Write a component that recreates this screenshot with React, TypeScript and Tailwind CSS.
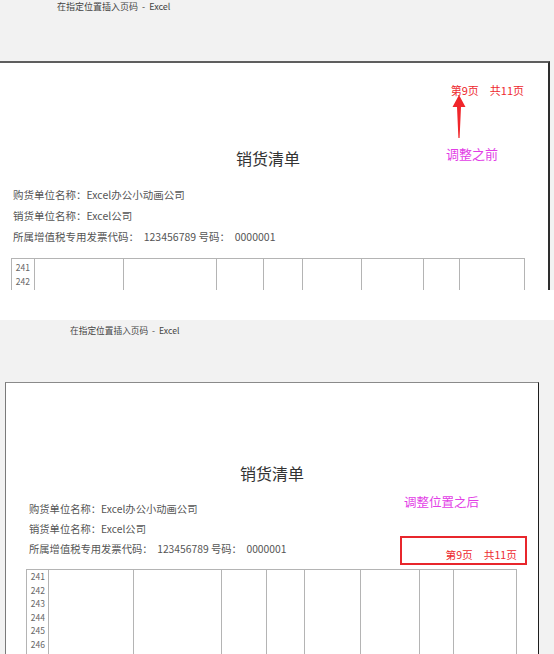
import React from "react";

const FONT = "font-['Noto_Sans_CJK_SC','Noto_Sans',sans-serif]";

function Numbers({ nums, cls }: { nums: string[]; cls: string }) {
  return (
    <div className={cls}>
      {nums.map((n) => (
        <div key={n}>{n}</div>
      ))}
    </div>
  );
}

function Arrow() {
  return (
    <svg width="14" height="44" viewBox="0 0 14 44" className="absolute left-[452px] top-[32px]">
      <path d="M7 0 L13.5 12 L9 12 L7.6 43 L6.4 43 L5 12 L0.5 12 Z" fill="#f0262b" />
    </svg>
  );
}

export default function App() {
  const topNums = ["241", "242", "243"];
  const botNums = ["241", "242", "243", "244", "245", "246", "247"];
  return (
    <div className={`w-[554px] h-[654px] overflow-hidden bg-white ${FONT}`}>
      {/* top screenshot */}
      <div className="h-[290px] overflow-hidden bg-[#f2f2f2] flex flex-col">
        <div className="h-[61px] shrink-0 pl-[57px] pt-[1px] text-[9px] leading-[12px] text-[#444] whitespace-pre">
          {"在指定位置插入页码  -  Excel"}
        </div>
        <div className="flex flex-1">
          <div className="relative w-[550px] bg-white border-t-2 border-r-2 border-t-[#5e5e5e] border-r-[#2e2e2e]">
            <div className="mt-[20px] flex justify-end pr-[24px] text-[11px] leading-[14px] text-[#ee2a2f]">
              <span>第9页</span>
              <span className="ml-[11px]">共11页</span>
            </div>
            <div className="mt-[50px] ml-[236px] text-[16px] leading-[22px] text-[#333]">销货清单</div>
            <div className="mt-[15px] pl-[13px] text-[10.5px] leading-[21px] text-[#555] whitespace-pre">
              <div>购货单位名称：Excel办公小动画公司</div>
              <div>销货单位名称：Excel公司</div>
              <div>{"所属增值税专用发票代码：  123456789 号码：  0000001"}</div>
            </div>
            <div className="mt-[11px] ml-[11px] w-[514px] h-[60px] border-t border-l border-[#b4b4b4] grid grid-cols-[23px_89px_93px_47px_39px_59px_62px_36px_65px]">
              <Numbers
                nums={topNums}
                cls="border-r border-[#b4b4b4] pr-[4px] text-right text-[8.5px] leading-[14px] text-[#666] pt-[1px]"
              />
              <div className="border-r border-[#b4b4b4]" />
              <div className="border-r border-[#b4b4b4]" />
              <div className="border-r border-[#b4b4b4]" />
              <div className="border-r border-[#b4b4b4]" />
              <div className="border-r border-[#b4b4b4]" />
              <div className="border-r border-[#b4b4b4]" />
              <div className="border-r border-[#b4b4b4]" />
              <div className="border-r border-[#b4b4b4]" />
            </div>
            <Arrow />
            <div className="absolute left-[446px] top-[83px] text-[13px] leading-[16px] text-[#e23de6]">调整之前</div>
          </div>
        </div>
      </div>
      <div className="h-[30px] bg-white" />
      {/* bottom screenshot */}
      <div className="h-[334px] overflow-hidden bg-[#f2f2f2] flex flex-col">
        <div className="h-[62px] shrink-0 pl-[70px] pt-[5px] text-[8.7px] leading-[12px] text-[#444] whitespace-pre">
          {"在指定位置插入页码  -  Excel"}
        </div>
        <div className="flex flex-1 pl-[5px]">
          <div className="relative w-[534px] bg-white border-t border-l border-r border-t-[#8a8a8a] border-l-[#7a7a7a] border-r-[#1e1e1e]">
            <div className="mt-[79px] ml-[234px] text-[16px] leading-[22px] text-[#333]">销货清单</div>
            <div className="mt-[15px] pl-[23px] text-[10.3px] leading-[20px] text-[#555] whitespace-pre">
              <div>购货单位名称：Excel办公小动画公司</div>
              <div>销货单位名称：Excel公司</div>
              <div>{"所属增值税专用发票代码：  123456789 号码：  0000001"}</div>
            </div>
            <div className="mt-[10px] ml-[20px] w-[491px] h-[100px] border-t border-l border-[#b4b4b4] grid grid-cols-[22px_85px_88px_45px_38px_56px_59px_34px_63px]">
              <Numbers
                nums={botNums}
                cls="border-r border-[#b4b4b4] pr-[3px] text-right text-[8.5px] leading-[13.6px] text-[#666]"
              />
              <div className="border-r border-[#b4b4b4]" />
              <div className="border-r border-[#b4b4b4]" />
              <div className="border-r border-[#b4b4b4]" />
              <div className="border-r border-[#b4b4b4]" />
              <div className="border-r border-[#b4b4b4]" />
              <div className="border-r border-[#b4b4b4]" />
              <div className="border-r border-[#b4b4b4]" />
              <div className="border-r border-[#b4b4b4]" />
            </div>
            <div className="absolute left-[398px] top-[111px] text-[12.5px] leading-[16px] text-[#e23de6]">调整位置之后</div>
            <div className="absolute left-[394px] top-[153px] w-[127px] h-[29px] border-2 border-[#e8262c] flex justify-end items-end pr-[8px] pb-[1px] text-[10.7px] leading-[14px] text-[#ee2a2f]">
              <span>第9页</span>
              <span className="ml-[11px]">共11页</span>
            </div>
          </div>
        </div>
      </div>
    </div>
  );
}
